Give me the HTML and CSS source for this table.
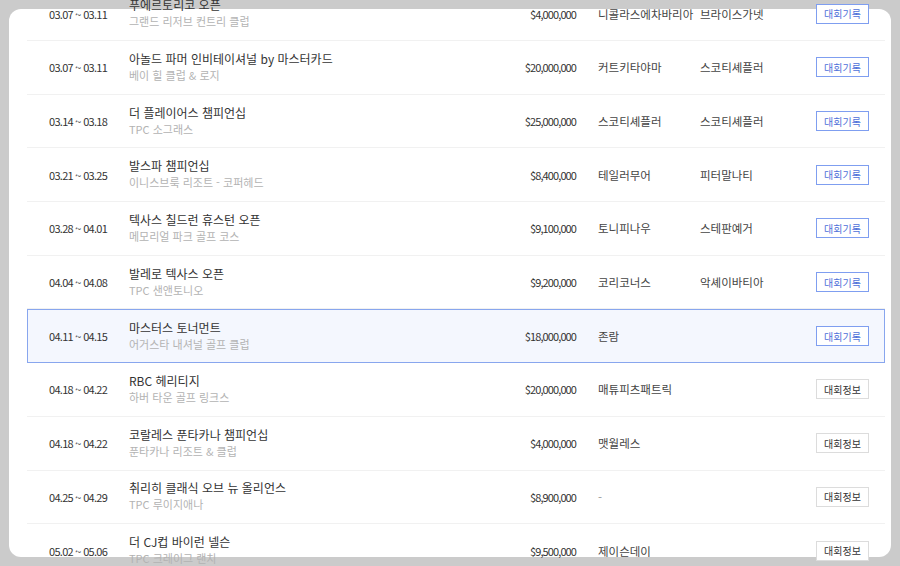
FILE: index.html
```html
<!DOCTYPE html>
<html lang="ko">
<head>
<meta charset="utf-8">
<link rel="stylesheet" href="styles.css">
</head>
<body>
<div class="frame">
  <div class="list">
    <div class="row">
      <div class="date">03.07 ~ 03.11</div>
      <div class="name"><div class="title">푸에르토리코 오픈</div><div class="place">그랜드 리저브 컨트리 클럽</div></div>
      <div class="prize">$4,000,000</div>
      <div class="win">니콜라스에차바리아</div>
      <div class="run">브라이스가넷</div>
      <div class="act"><span class="btn rec">대회기록</span></div>
    </div>
    <div class="row">
      <div class="date">03.07 ~ 03.11</div>
      <div class="name"><div class="title">아놀드 파머 인비테이셔널 by 마스터카드</div><div class="place">베이 힐 클럽 &amp; 로지</div></div>
      <div class="prize">$20,000,000</div>
      <div class="win">커트키타야마</div>
      <div class="run">스코티셰플러</div>
      <div class="act"><span class="btn rec">대회기록</span></div>
    </div>
    <div class="row">
      <div class="date">03.14 ~ 03.18</div>
      <div class="name"><div class="title">더 플레이어스 챔피언십</div><div class="place">TPC 소그래스</div></div>
      <div class="prize">$25,000,000</div>
      <div class="win">스코티셰플러</div>
      <div class="run">스코티셰플러</div>
      <div class="act"><span class="btn rec">대회기록</span></div>
    </div>
    <div class="row">
      <div class="date">03.21 ~ 03.25</div>
      <div class="name"><div class="title">발스파 챔피언십</div><div class="place">이니스브룩 리조트 - 코퍼헤드</div></div>
      <div class="prize">$8,400,000</div>
      <div class="win">테일러무어</div>
      <div class="run">피터말나티</div>
      <div class="act"><span class="btn rec">대회기록</span></div>
    </div>
    <div class="row">
      <div class="date">03.28 ~ 04.01</div>
      <div class="name"><div class="title">텍사스 칠드런 휴스턴 오픈</div><div class="place">메모리얼 파크 골프 코스</div></div>
      <div class="prize">$9,100,000</div>
      <div class="win">토니피나우</div>
      <div class="run">스테판예거</div>
      <div class="act"><span class="btn rec">대회기록</span></div>
    </div>
    <div class="row">
      <div class="date">04.04 ~ 04.08</div>
      <div class="name"><div class="title">발레로 텍사스 오픈</div><div class="place">TPC 샌앤토니오</div></div>
      <div class="prize">$9,200,000</div>
      <div class="win">코리코너스</div>
      <div class="run">악셰이바티아</div>
      <div class="act"><span class="btn rec">대회기록</span></div>
    </div>
    <div class="row current">
      <div class="date">04.11 ~ 04.15</div>
      <div class="name"><div class="title">마스터스 토너먼트</div><div class="place">어거스타 내셔널 골프 클럽</div></div>
      <div class="prize">$18,000,000</div>
      <div class="win">존람</div>
      <div class="run"></div>
      <div class="act"><span class="btn rec">대회기록</span></div>
    </div>
    <div class="row">
      <div class="date">04.18 ~ 04.22</div>
      <div class="name"><div class="title">RBC 헤리티지</div><div class="place">하버 타운 골프 링크스</div></div>
      <div class="prize">$20,000,000</div>
      <div class="win">매튜피츠패트릭</div>
      <div class="run"></div>
      <div class="act"><span class="btn info">대회정보</span></div>
    </div>
    <div class="row">
      <div class="date">04.18 ~ 04.22</div>
      <div class="name"><div class="title">코랄레스 푼타카나 챔피언십</div><div class="place">푼타카나 리조트 &amp; 클럽</div></div>
      <div class="prize">$4,000,000</div>
      <div class="win">맷월레스</div>
      <div class="run"></div>
      <div class="act"><span class="btn info">대회정보</span></div>
    </div>
    <div class="row">
      <div class="date">04.25 ~ 04.29</div>
      <div class="name"><div class="title">취리히 클래식 오브 뉴 올리언스</div><div class="place">TPC 루이지애나</div></div>
      <div class="prize">$8,900,000</div>
      <div class="win dash">-</div>
      <div class="run"></div>
      <div class="act"><span class="btn info">대회정보</span></div>
    </div>
    <div class="row">
      <div class="date">05.02 ~ 05.06</div>
      <div class="name"><div class="title">더 CJ컵 바이런 넬슨</div><div class="place">TPC 크레이그 랜치</div></div>
      <div class="prize">$9,500,000</div>
      <div class="win">제이슨데이</div>
      <div class="run"></div>
      <div class="act"><span class="btn info">대회정보</span></div>
    </div>
  </div>
</div>
</body>
</html>
```

FILE: styles.css
```css
html, body {
  margin: 0;
  padding: 0;
  height: 566px;
  overflow: hidden;
  background: #cbcbcb;
  font-family: "Noto Sans CJK KR", "Noto Sans", sans-serif;
  color: #333;
}
.frame {
  margin: 9px 9px 0 9px;
  height: 548px;
  background: #fff;
  border-radius: 12px;
  padding: 0 6px 0 18px;
}
.list {
  position: relative;
  top: -21.7px;
}
.row {
  box-sizing: border-box;
  height: 53.7px;
  display: grid;
  grid-template-columns: 80px 1fr 100px 124px 116px 53px;
  align-items: center;
  padding: 0 16px 0 22px;
  border-bottom: 1px solid #f1f1f1;
}
.row.current {
  background: #f4f7fe;
  border: 1px solid #88a6ee;
  padding-left: 21px;
  padding-right: 15px;
}
.date {
  font-size: 11px;
  letter-spacing: -0.7px;
  color: #333;
}
.name {
  display: flex;
  flex-direction: column;
  margin-top: -1px;
}
.title {
  font-size: 12px;
  line-height: 16px;
  color: #333;
}
.place {
  font-size: 11px;
  line-height: 16px;
  color: #b3b3b3;
}
.prize {
  text-align: right;
  font-size: 11px;
  letter-spacing: -0.9px;
  color: #333;
}
.win {
  padding-left: 22px;
  font-size: 11.5px;
  color: #444;
}
.win.dash { color: #999; }
.run {
  font-size: 11.5px;
  color: #444;
}
.act {
  display: flex;
  justify-content: flex-end;
}
.btn {
  box-sizing: border-box;
  width: 54px;
  height: 20px;
  display: flex;
  align-items: center;
  justify-content: center;
  font-size: 10px;
  background: #fff;
}
.btn.rec {
  border: 1px solid #7f9ef0;
  color: #4d6fd9;
}
.btn.info {
  border: 1px solid #dcdcdc;
  color: #333;
}
```
